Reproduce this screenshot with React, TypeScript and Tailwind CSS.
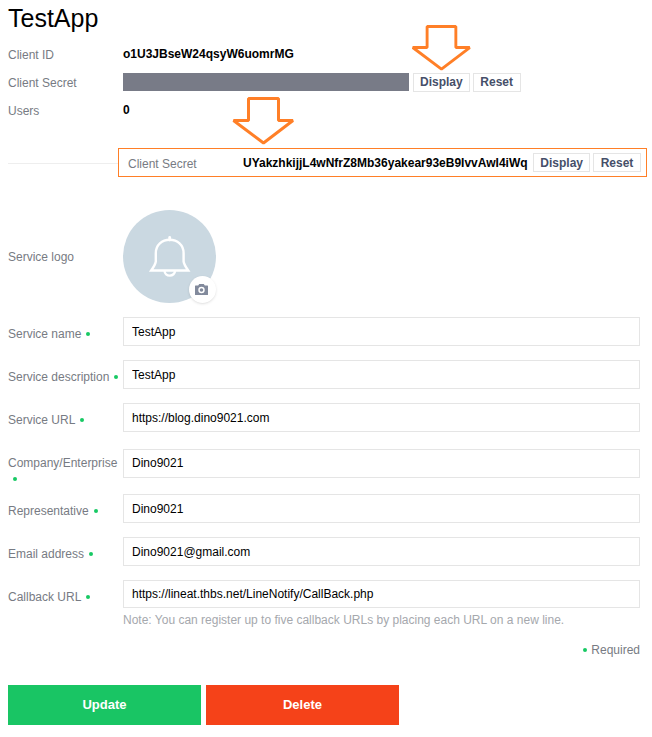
import React, { useState } from 'react'

interface FieldProps {
  id: string
  label: string
  value: string
  type?: string
}

const initialFields: FieldProps[] = [
  { id: 'name', label: 'Service name', value: 'TestApp' },
  { id: 'description', label: 'Service description', value: 'TestApp' },
  { id: 'url', label: 'Service URL', value: 'https://blog.dino9021.com' },
  { id: 'company', label: 'Company/Enterprise', value: 'Dino9021' },
  { id: 'representative', label: 'Representative', value: 'Dino9021' },
  { id: 'email', label: 'Email address', value: 'Dino9021@gmail.com', type: 'email' },
]

function Dot({ className = 'ml-[5px]' }: { className?: string }) {
  return <span className={`mb-0.5 inline-block h-1 w-1 rounded-full bg-[#17c964] align-middle ${className}`} />
}

function Arrow({ className }: { className: string }) {
  return (
    <svg
      className={`pointer-events-none absolute ${className}`}
      viewBox="0 0 62 48"
      fill="white"
      stroke="#ff7f27"
      strokeWidth="3"
      strokeLinejoin="bevel"
      aria-hidden="true"
    >
      <path d="M16.5 1.5h30v22H61L31.5 46 1.5 23.5h15z" />
    </svg>
  )
}

function SmallButton({ children }: { children: React.ReactNode }) {
  return (
    <button type="button" className="h-[19px] min-w-12 border border-[#e5e5e5] bg-white px-1.5 leading-4 font-bold text-[#464f69]">
      {children}
    </button>
  )
}

function BellIcon() {
  return (
    <svg className="h-full w-full" viewBox="0 0 93 93" fill="none" stroke="white" strokeWidth="2.4" aria-hidden="true">
      <path d="M46.7 27.5v2.5" strokeWidth="2.8" strokeLinecap="round" />
      <path d="M32.8 51.5V43.2C32.8 35 39 29.8 46.7 29.8S60.6 35 60.6 43.2V51.5Q61 54.5 65.2 60.5H28.2Q32.4 54.5 32.8 51.5z" />
      <path d="M41.6 61a5.2 4.6 0 0 0 10.4 0" />
    </svg>
  )
}

function CameraIcon() {
  return (
    <svg className="h-[11px] w-[13px]" viewBox="0 0 13 11" aria-hidden="true">
      <path d="M4.2 0h4.6l1 1.5H12.5a.5.5 0 0 1 .5.5V10.5a.5.5 0 0 1-.5.5H.5a.5.5 0 0 1-.5-.5V2a.5.5 0 0 1 .5-.5h2.7z" fill="#828a9c" />
      <circle cx="6.5" cy="6" r="2.5" fill="none" stroke="white" strokeWidth="1.4" />
    </svg>
  )
}

function Field({ id, label, value, type = 'text' }: FieldProps) {
  const [text, setText] = useState(value)

  return (
    <div className="flex min-h-[43px] items-center">
      <label htmlFor={id} className="w-[115px] shrink-0 self-start pt-4 leading-4 text-[#777b83]">
        {label}
        <Dot />
      </label>
      <input
        id={id}
        type={type}
        value={text}
        onChange={(e) => setText(e.target.value)}
        className="h-[29px] min-w-0 flex-1 border border-[#e5e5e5] px-2 text-black outline-none"
      />
    </div>
  )
}

export default function App() {
  const [callback, setCallback] = useState('https://lineat.thbs.net/LineNotify/CallBack.php')

  return (
    <main className="bg-white pt-1 pr-3 pb-3 pl-2 font-['Liberation_Sans',Arial,sans-serif] text-[12px] text-black">
      <h1 className="text-[25px] leading-7">TestApp</h1>

      <dl className="mt-2">
        <div className="flex h-7 items-center">
          <dt className="w-[115px] pt-0.5 text-[#777b83]">Client ID</dt>
          <dd className="font-bold">o1U3JBseW24qsyW6uomrMG</dd>
        </div>
        <div className="flex h-7 items-center">
          <dt className="w-[115px] pt-0.5 text-[#777b83]">Client Secret</dt>
          <dd className="flex gap-1">
            <span className="h-[18px] w-[286px] bg-[#787b87]" />
            <span className="relative flex gap-[3px]">
              <SmallButton>Display</SmallButton>
              <SmallButton>Reset</SmallButton>
              <Arrow className="bottom-full -left-0.5 mb-0.5 h-[46px] w-[60px]" />
            </span>
          </dd>
        </div>
        <div className="flex h-7 items-center">
          <dt className="w-[115px] pt-0.5 text-[#777b83]">Users</dt>
          <dd className="font-bold">0</dd>
        </div>
      </dl>

      <div className="mt-6 -mr-[7px] flex items-center">
        <hr className="mt-0.5 w-[110px] border-[#eeeeee]" />
        <div className="relative flex h-[29px] flex-1 items-center border border-[#ff7f27] pl-[9px]">
          <span className="w-[115px] pt-0.5 text-[#777b83]">Client Secret</span>
          <span className="font-bold">UYakzhkijjL4wNfrZ8Mb36yakear93eB9IvvAwI4iWq</span>
          <span className="ml-auto flex gap-[3px] pr-[5px]">
            <SmallButton>Display</SmallButton>
            <SmallButton>Reset</SmallButton>
          </span>
          <Arrow className="bottom-full left-[113px] mb-1 h-12 w-[62px]" />
        </div>
      </div>

      <form className="mt-[26px]" onSubmit={(e) => e.preventDefault()}>
        <div className="flex items-center py-[7px]">
          <span className="w-[115px] text-[#777b83]">Service logo</span>
          <div className="relative h-[93px] w-[93px] rounded-full bg-[#cad8e1]">
            <BellIcon />
            <button
              type="button"
              aria-label="Change logo"
              className="absolute right-0 bottom-0 flex h-[27px] w-[27px] items-center justify-center rounded-full bg-white pr-0.5 shadow-sm"
            >
              <CameraIcon />
            </button>
          </div>
        </div>

        {initialFields.map((field) => (
          <Field key={field.id} {...field} />
        ))}

        <div className="flex pt-[7px]">
          <label htmlFor="callback" className="w-[115px] shrink-0 pt-[9px] leading-4 text-[#777b83]">
            Callback URL
            <Dot />
          </label>
          <div className="min-w-0 flex-1">
            <textarea
              id="callback"
              rows={1}
              value={callback}
              onChange={(e) => setCallback(e.target.value)}
              className="block h-7 w-full resize-none overflow-hidden border border-[#e5e5e5] px-2 py-[5px] leading-4 text-black outline-none"
            />
            <p className="mt-1 leading-4 text-[#a5a8ad]">
              Note: You can register up to five callback URLs by placing each URL on a new line.
            </p>
          </div>
        </div>

        <p className="mt-3.5 text-right leading-4 text-[#777b83]">
          <Dot className="mr-1" />
          Required
        </p>

        <div className="mt-[27px] flex gap-[5px] text-[13px] font-bold text-white">
          <button type="submit" className="h-10 w-[193px] bg-[#19c564]">Update</button>
          <button type="button" className="h-10 w-[193px] bg-[#f54219]">Delete</button>
        </div>
      </form>
    </main>
  )
}
